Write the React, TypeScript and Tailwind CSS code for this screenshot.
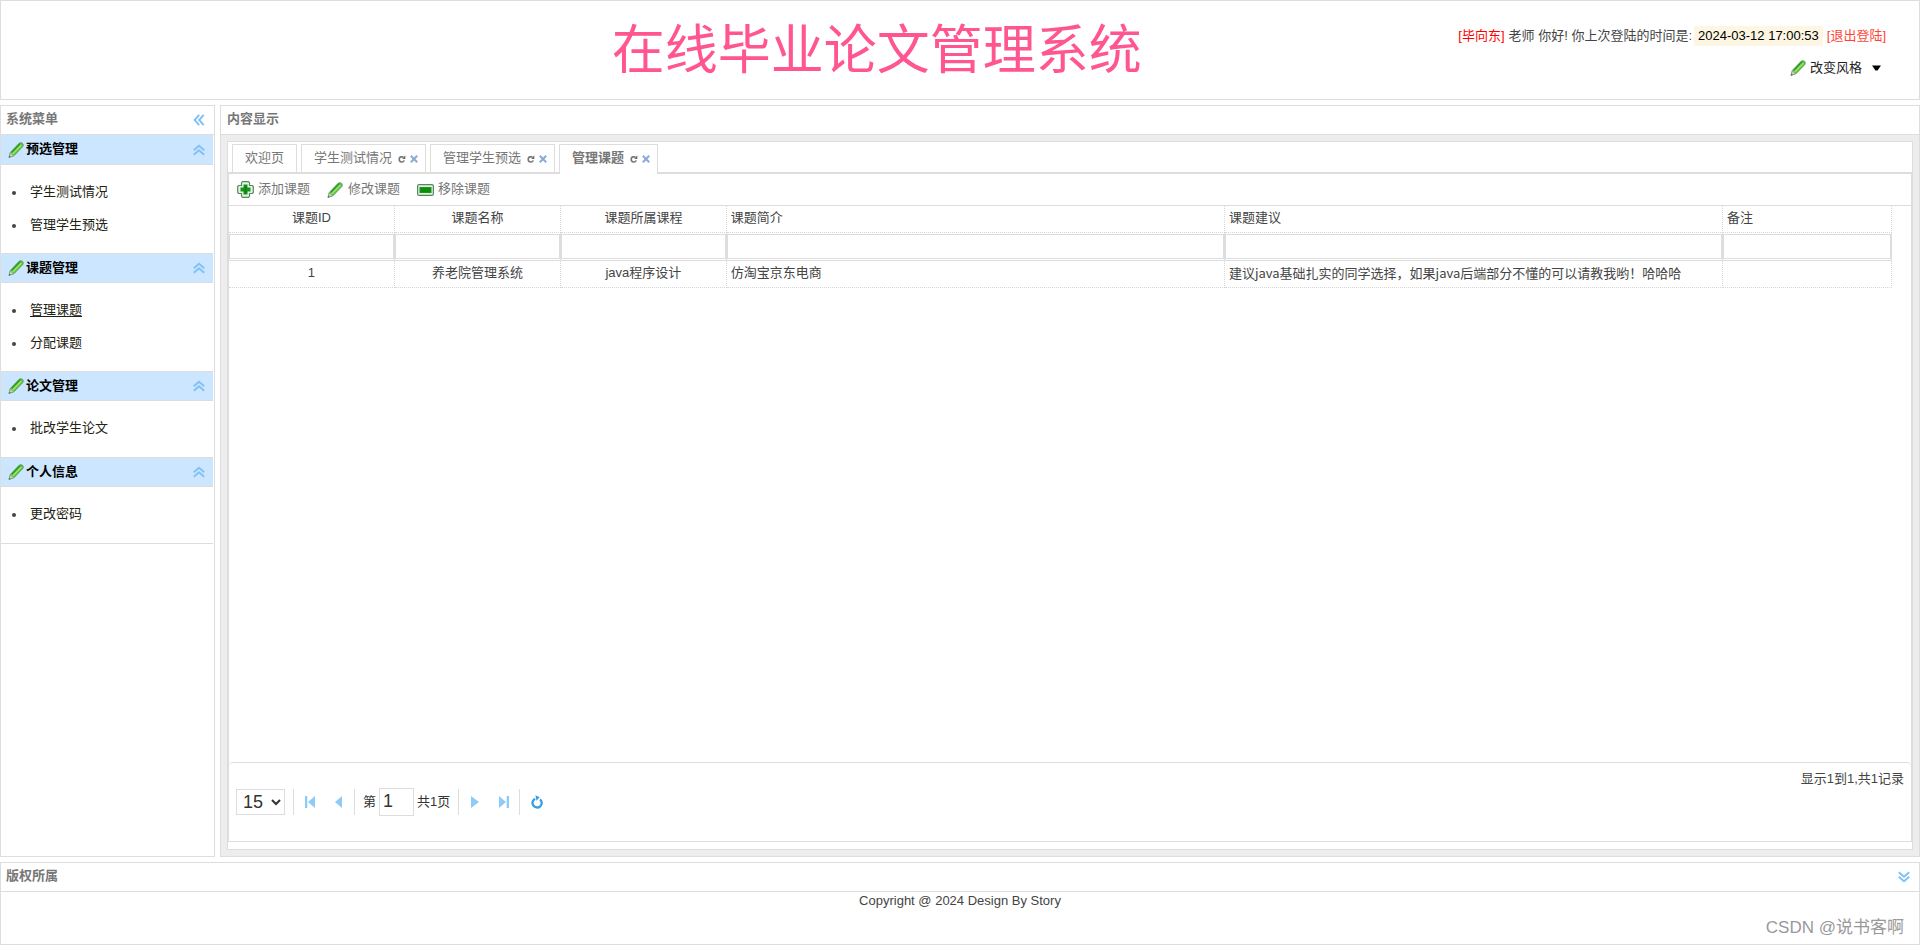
import React from "react";

const cjk = "font-['Liberation_Sans','Noto_Sans_CJK_SC',sans-serif]";

function Pencil({ className = "" }: { className?: string }) {
  return (
    <svg className={className} width="16" height="16" viewBox="0 0 16 16" aria-hidden="true">
      <path d="M1 15.500 2.300 10.500 11.200 1.200Q12.700.1 14.400 1.200 16 2.600 14.900 4.400L6 13.700Z" fill="#5cc43c" stroke="#5a9a5c" strokeWidth=".9" />
      <path d="M3.800 10.300 12.300 1.600" stroke="#2a9a2a" strokeWidth="1.400" />
      <path d="M4.700 12 13.400 3" stroke="#a0e468" strokeWidth="1.600" />
      <path d="M1 15.500 2.300 10.900 5.600 13.600Z" fill="#c9d8c4" stroke="#8aa58a" strokeWidth=".7" />
      <path d="M.8 15.600 1.500 13.600 2.700 14.800Z" fill="#4a6a4a" />
    </svg>
  );
}

function PlusIcon() {
  return (
    <svg width="17" height="17" viewBox="0 0 17 17" aria-hidden="true">
      <path d="M5.500.7h6l1 1v2.800h2.800l1 1v6l-1 1h-2.800v2.800l-1 1h-6l-1-1v-2.800H1.700l-1-1v-6l1-1h2.800V1.700z" fill="#e6f2e6" stroke="#55885f" strokeWidth="1.200" />
      <path d="M6.500 3.500h4v3H13.500v4h-3v3h-4v-3h-3v-4h3z" fill="#17951a" />
      <path d="M7.500 4.500h2v8h-2z" fill="#0a850a" />
    </svg>
  );
}

function MinusIcon() {
  return (
    <svg width="17" height="12" viewBox="0 0 17 12" aria-hidden="true">
      <rect x=".6" y=".6" width="15.800" height="10.800" rx="1.500" fill="#e3efe3" stroke="#55885f" strokeWidth="1.200" />
      <rect x="2.500" y="3" width="12" height="6" fill="#179a17" />
      <rect x="3.500" y="4" width="10" height="4" fill="#0e8c0e" />
    </svg>
  );
}

function Chevrons({ className = "" }: { className?: string }) {
  return (
    <svg className={className} width="12" height="12" viewBox="0 0 12 12" fill="none" stroke="#80c2f3" strokeWidth="2" aria-hidden="true">
      <path d="M.8 6.200 6 1.700 11.200 6.200M.8 10.700 6 6.200 11.200 10.700" />
    </svg>
  );
}

function TabIcons() {
  return (
    <>
      <button type="button" aria-label="刷新" className="ml-[6px] mt-[2px]">
        <svg width="8" height="8" viewBox="0 0 8 8" fill="none" aria-hidden="true">
          <path d="M5.500 1.900H3.200Q1.200 2.100 1.200 4.400T3.600 7H4.300Q5.900 6.900 6.200 5.400" stroke="#777" strokeWidth="1.600" />
          <path d="M7.300.2V3.900H4.300Z" fill="#666" />
        </svg>
      </button>
      <button type="button" aria-label="关闭" className="ml-1 mt-[2px]">
        <svg width="8" height="8" viewBox="0 0 8 8" stroke="#8aa8d8" strokeWidth="2" aria-hidden="true">
          <path d="M.8.8 7.200 7.200M7.200.8.8 7.200" />
        </svg>
      </button>
    </>
  );
}

function Reload() {
  return (
    <svg width="12" height="14" viewBox="0 0 12 14" fill="none" aria-hidden="true">
      <path d="M9 4.300A4.600 4.600 0 1 1 4.200 3.700" stroke="#3c9ce0" strokeWidth="2.300" />
      <path d="M4.400.2 8.600 2.200 5.600 5.700Z" fill="#3c9ce0" />
    </svg>
  );
}

const menu = [
  { title: "预选管理", items: ["学生测试情况", "管理学生预选"] },
  { title: "课题管理", items: ["管理课题", "分配课题"] },
  { title: "论文管理", items: ["批改学生论文"] },
  { title: "个人信息", items: ["更改密码"] },
];

const tabs = [
  { label: "欢迎页", closable: false },
  { label: "学生测试情况", closable: true },
  { label: "管理学生预选", closable: true },
  { label: "管理课题", closable: true },
];

const tools = [
  { label: "添加课题", icon: <PlusIcon /> },
  { label: "修改课题", icon: <Pencil className="mr-px" /> },
  { label: "移除课题", icon: <MinusIcon /> },
];

const columns = [
  { label: "课题ID", value: "1", center: true },
  { label: "课题名称", value: "养老院管理系统", center: true },
  { label: "课题所属课程", value: "java程序设计", center: true },
  { label: "课题简介", value: "仿淘宝京东电商", center: false },
  { label: "课题建议", value: "建议java基础扎实的同学选择，如果java后端部分不懂的可以请教我哟！哈哈哈", center: false },
  { label: "备注", value: "", center: false },
];

const cell = "h-[27px] truncate border-r border-b border-dotted border-[#d6d6d6] px-1 pt-0 pb-[2px] font-normal";

function Header() {
  return (
    <header className="flex h-[100px] border border-[#ddd] bg-white">
      <h1 className="flex-1 whitespace-nowrap pl-[294px] pt-[14px] text-center text-[53px] leading-[72px] text-[#ff5590]">
        在线毕业论文管理系统
      </h1>
      <div className="flex flex-col items-end pr-[33px] pt-[25px]">
        <p className="flex h-5 items-center whitespace-nowrap">
          <span className="text-[#f00]">[毕向东]</span>
          <span className="ml-1 mr-[2px]">老师 你好! 你上次登陆的时间是:</span>
          <span className="bg-[#fdf6e2] px-1 leading-5 text-black">2024-03-12 17:00:53</span>
          <a href="#logout" className="ml-1 text-[#ff4433]">[退出登陆]</a>
        </p>
        <button type="button" className="mr-[5px] mt-3 flex h-5 items-center text-[#222]">
          <Pencil className="mr-1" />
          改变风格
          <svg className="ml-[10px]" width="9" height="6" viewBox="0 0 9 6" aria-hidden="true">
            <path d="M0 .5H9L5.500 5.500H3.500Z" fill="#000" />
          </svg>
        </button>
      </div>
    </header>
  );
}

function Sidebar() {
  return (
    <aside className="w-[215px] shrink-0 border border-[#ddd] bg-white">
      <div className="flex h-[29px] items-center justify-between border-b border-[#ddd] pl-[5px] pr-[9px] text-[#777]">
        <h2 className="pb-[2px] font-bold">系统菜单</h2>
        <button type="button" aria-label="收起菜单">
          <Chevrons className="-rotate-90" />
        </button>
      </div>
      <nav className="mr-px border-b border-[#ddd]">
        {menu.map((g, i) => (
          <section key={g.title}>
            <h3 className={"flex h-[30px] items-center border-b border-[#ddd] bg-[#cce6ff] pl-[7px] pr-2 font-bold text-black " + (i > 0 ? "border-t" : "")}>
              <Pencil className="mr-[2px]" />
              <span className="flex-1 pb-px">{g.title}</span>
              <button type="button" aria-label={"收起" + g.title}>
                <Chevrons />
              </button>
            </h3>
            <ul className="min-h-14 py-[11px]">
              {g.items.map((t) => (
                <li key={t} className="flex h-[33px] items-center pl-[11px]">
                  <span className="mr-[14px] size-1 rounded-full bg-[#444]" />
                  <a href="#page" className={"pb-px text-[#222211] " + (t === "管理课题" ? "underline underline-offset-2" : "")}>{t}</a>
                </li>
              ))}
            </ul>
          </section>
        ))}
      </nav>
    </aside>
  );
}

function Grid() {
  return (
    <table className="w-[calc(100%-19px)] table-fixed border-separate border-spacing-0">
      <colgroup>
        <col className="w-[9.98%]" />
        <col className="w-[9.98%]" />
        <col className="w-[9.98%]" />
        <col className="w-[29.95%]" />
        <col className="w-[29.95%]" />
        <col />
      </colgroup>
      <thead>
        <tr>
          {columns.map((c) => (
            <th key={c.label} className={cell + (c.center ? " text-center" : " text-left")}>{c.label}</th>
          ))}
        </tr>
        <tr>
          {columns.map((c) => (
            <td key={c.label} className="h-7 border-r border-b border-[#ddd] p-0">
              <input aria-label={c.label} className="block h-[25px] w-full border border-[#ddd] px-1 outline-none" />
            </td>
          ))}
        </tr>
      </thead>
      <tbody>
        <tr>
          {columns.map((c, i) => (
            <td key={c.label} className={cell + (c.center ? " text-center" : " text-left") + (i === 4 ? " font-['Noto_Sans_CJK_SC',sans-serif]" : "")}>{c.value}</td>
          ))}
        </tr>
      </tbody>
    </table>
  );
}

const sep = "h-[26px] w-px bg-[#ddd]";

function Pager() {
  return (
    <footer className="h-[79px] rounded-t border-t border-[#ddd] px-[7px] pt-[6px]">
      <p className="text-right leading-5">显示1到1,共1记录</p>
      <div className="-mt-px flex h-7 items-center">
        <select aria-label="每页条数" className="h-[26px] w-[49px] border border-[#ddd] bg-white pl-[2px] text-[18px] text-[#333]">
          <option>15</option>
        </select>
        <span className={sep + " ml-2"} />
        <button type="button" aria-label="首页" className="ml-[11px]">
          <svg width="10" height="12" viewBox="0 0 10 12" fill="#8ecbf7"><path d="M0 0H2.300V12H0ZM10 0V12L3 6Z" /></svg>
        </button>
        <button type="button" aria-label="上一页" className="ml-5">
          <svg width="7" height="12" viewBox="0 0 7 12" fill="#8ecbf7"><path d="M7 0V12L0 6Z" /></svg>
        </button>
        <span className={sep + " ml-3"} />
        <label className="ml-2 flex items-center text-[#333]">
          第
          <input defaultValue="1" className="mx-[3px] h-7 w-[35px] border border-[#ddd] px-[3px] pb-px text-[18px] outline-none" />
          共1页
        </label>
        <span className={sep + " ml-2"} />
        <button type="button" aria-label="下一页" className="ml-3">
          <svg width="8" height="12" viewBox="0 0 8 12" fill="#8ecbf7"><path d="M0 0V12L8 6Z" /></svg>
        </button>
        <button type="button" aria-label="末页" className="ml-5">
          <svg width="10" height="12" viewBox="0 0 10 12" fill="#8ecbf7"><path d="M10 0H7.700V12H10ZM0 0V12L7 6Z" /></svg>
        </button>
        <span className={sep + " ml-[10px]"} />
        <button type="button" aria-label="刷新" className="ml-[11px]">
          <Reload />
        </button>
      </div>
    </footer>
  );
}

function Content() {
  return (
    <main className="flex min-w-0 flex-1 flex-col border border-[#ddd] bg-[#ededed]">
      <h2 className="flex h-[29px] items-center border-b border-[#ddd] bg-white pb-[2px] pl-[6px] font-bold text-[#777]">内容显示</h2>
      <div className="m-[6px] flex flex-1 flex-col border border-[#ddd] bg-white pb-[7px]">
        <div role="tablist" className="flex h-[31px] items-end gap-1 border-b border-[#ddd] pl-1">
          {tabs.map((t) => {
            const active = t.label === "管理课题";
            return (
              <div
                key={t.label}
                role="tab"
                aria-selected={active}
                className={
                  "flex items-center border border-b-0 border-[#ddd] bg-white text-[#777] " +
                  (active ? "relative -mb-[2px] h-[30px] pb-1 font-bold " : "h-7 pb-[2px] ") +
                  (t.closable ? "pl-3 pr-[7px]" : "px-3")
                }
              >
                <span>{t.label}</span>
                {t.closable && <TabIcons />}
              </div>
            );
          })}
        </div>
        <section className="flex flex-1 flex-col border border-[#ddd]">
          <div className="flex h-8 shrink-0 items-center gap-[17px] border-b border-[#ddd] pl-2 text-[#777]">
            {tools.map((t) => (
              <button key={t.label} type="button" className="flex items-center gap-1">
                {t.icon}
                <span className="pb-[2px]">{t.label}</span>
              </button>
            ))}
          </div>
          <div className="flex-1">
            <Grid />
          </div>
          <Pager />
        </section>
      </div>
    </main>
  );
}

export default function App() {
  return (
    <div className={"relative flex min-h-screen flex-col gap-[5px] bg-white text-[13px] leading-5 text-[#444] " + cjk}>
      <Header />
      <div className="flex flex-1 gap-[5px]">
        <Sidebar />
        <Content />
      </div>
      <footer className="h-[83px] border border-[#ddd] bg-white">
        <div className="flex h-[29px] items-center justify-between border-b border-[#ddd] pl-[5px] pr-[9px]">
          <h2 className="pb-[2px] font-bold text-[#777]">版权所属</h2>
          <button type="button" aria-label="收起">
            <Chevrons className="rotate-180" />
          </button>
        </div>
        <p className="text-center leading-[18px]">Copyright @ 2024 Design By Story</p>
      </footer>
      <span className="absolute right-4 bottom-[5px] text-[17px] leading-6 text-[#999]">CSDN @说书客啊</span>
    </div>
  );
}
